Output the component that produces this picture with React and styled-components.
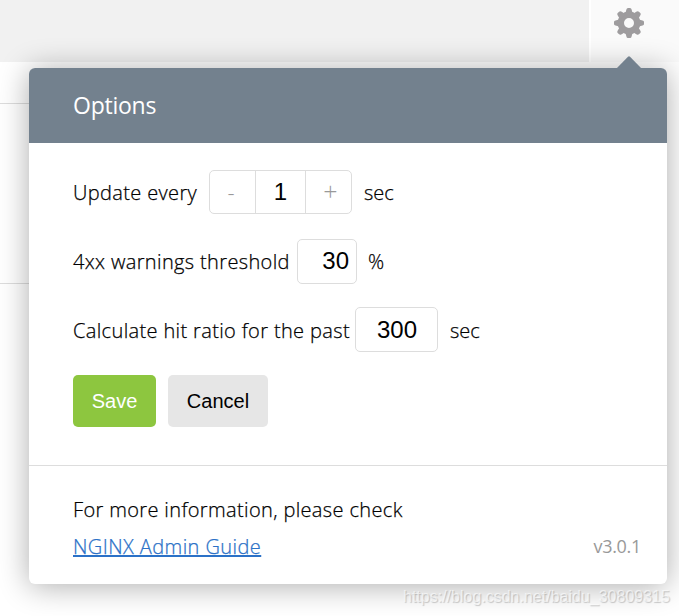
import React from "react";
import styled, { createGlobalStyle } from "styled-components";

const Global = createGlobalStyle`
  *, *::before, *::after { box-sizing: border-box; }
  body { margin: 0; background: #fff; overflow: hidden; }
`;

const Page = styled.div`
  position: relative;
  width: 679px;
  height: 616px;
  overflow: hidden;
  background: #fff;
  color: #000;
  font: 300 20px/30px "Open Sans", sans-serif;
`;

const TopBar = styled.header`
  display: flex;
  justify-content: space-between;
  height: 62px;
`;

const NavSpace = styled.div`
  width: 589px;
  background: #f1f1f1;
`;

const SettingsTab = styled.button`
  display: flex;
  justify-content: center;
  width: 88px;
  padding: 8px 12px 0 0;
  border: 0;
  background: #fafafa;
`;

const Backdrop = styled.div`
  width: 600px;
  height: ${(p) => p.$height}px;
  border-bottom: 1px solid #ddd;
`;

const Dialog = styled.section`
  position: absolute;
  left: 29px;
  top: 68px;
  width: 638px;
  height: 516px;
  display: flex;
  flex-direction: column;
  border-radius: 6px;
  background: #fff;
  box-shadow: 0 2px 31px rgba(0, 0, 0, 0.33);
`;

const Arrow = styled.svg`
  position: absolute;
  left: 587px;
  top: -12px;
`;

const Title = styled.h1`
  height: 75px;
  margin: 0;
  padding: 0 44px;
  border-radius: 6px 6px 0 0;
  background: #73818e;
  color: #fff;
  font-size: 23px;
  font-weight: 400;
  letter-spacing: -0.25px;
  line-height: 75px;
`;

const Form = styled.form`
  display: flex;
  flex-direction: column;
  height: 323px;
  padding: 27px 44px 0;
  border-bottom: 1px solid #ddd;
`;

const Row = styled.div`
  display: flex;
  align-items: center;
  height: 45px;
  margin-bottom: ${(p) => p.$gap}px;
  white-space: nowrap;
`;

const Label = styled.label`
  width: ${(p) => p.$width}px;
  padding-top: ${(p) => p.$drop || 0}px;
  letter-spacing: 0.36px;
  -webkit-text-stroke: 0.25px currentColor;
`;

const Unit = styled.span`
  margin-left: ${(p) => p.$gap || 12}px;
  padding-top: ${(p) => p.$drop || 0}px;
  -webkit-text-stroke: 0.25px currentColor;
`;

const Stepper = styled.div`
  display: flex;
  align-self: flex-start;
  width: 143px;
  height: 44px;
  border: 1px solid #ddd;
  border-radius: 5px;
`;

const StepButton = styled.button`
  width: 45px;
  padding: 0 3px 0 0;
  border: 0;
  background: none;
  color: #999;
  font: 300 22px/30px "Open Sans", sans-serif;

  &:last-child {
    padding: 0 0 3px 4px;
    font-size: 25px;
  }
`;

const StepValue = styled.output`
  flex: 1;
  border: solid #ddd;
  border-width: 0 1px;
  font: 400 24px/42px "Liberation Sans", Arial, sans-serif;
  text-align: center;
`;

const NumberInput = styled.input`
  width: ${(p) => p.$width}px;
  height: 45px;
  padding: 0 ${(p) => p.$right}px ${(p) => p.$lift || 0}px 0;
  border: 1px solid #ddd;
  border-radius: 5px;
  background: #fff;
  color: #000;
  font: 400 24px "Liberation Sans", Arial, sans-serif;
  text-align: right;
`;

const Actions = styled.div`
  display: flex;
  gap: 12px;
`;

const Action = styled.button`
  width: ${(p) => (p.$primary ? 83 : 100)}px;
  height: 52px;
  padding: 0;
  border: 0;
  border-radius: 5px;
  background: ${(p) => (p.$primary ? "#8dc63f" : "#e6e6e6")};
  color: ${(p) => (p.$primary ? "#fff" : "#000")};
  font: 400 20px "Liberation Sans", Arial, sans-serif;
`;

const Footer = styled.footer`
  display: flex;
  justify-content: space-between;
  align-items: flex-end;
  height: 118px;
  padding: 0 26px 19px 44px;
  line-height: 37px;
`;

const Help = styled.p`
  margin: 0;
  letter-spacing: 0.36px;
  -webkit-text-stroke: 0.25px currentColor;
`;

const GuideLink = styled.a`
  display: block;
  width: max-content;
  color: #2b71c7;
  letter-spacing: 0.42px;
  text-decoration: underline;
  text-decoration-thickness: 2px;
  text-underline-offset: 1px;
`;

const Version = styled.span`
  color: #999;
  font-size: 18px;
  font-weight: 400;
  letter-spacing: -0.3px;
  line-height: 37px;
`;

const Watermark = styled.span`
  position: absolute;
  left: 403px;
  top: 587px;
  color: rgba(255, 255, 255, 0.6);
  font: 400 16px/20px "Liberation Sans", Arial, sans-serif;
  text-shadow: 1px 1px 1px rgba(0, 0, 0, 0.2);
  white-space: nowrap;
`;

const TOOTH = "M-3.8 -9 L-2.6 -13.5 Q-2.3 -15 -1 -15 H1 Q2.3 -15 2.6 -13.5 L3.8 -9Z";

const Gear = () => (
  <svg width="30" height="30" viewBox="-15 -15 30 30" fill="#9e9c9e">
    <circle r="8.2" fill="none" stroke="#9e9c9e" strokeWidth="6.4" />
    {[0, 45, 90, 135, 180, 225, 270, 315].map((a) => (
      <path key={a} d={TOOTH} transform={`rotate(${a})`} />
    ))}
  </svg>
);

export default function App() {
  return (
    <Page>
      <Global />
      <TopBar>
        <NavSpace />
        <SettingsTab aria-label="Settings"><Gear /></SettingsTab>
      </TopBar>
      <Backdrop $height={42} />
      <Backdrop $height={180} />
      <Dialog>
        <Arrow width="26" height="13" viewBox="0 0 26 13">
          <path d="M0 13 L12 .8 Q13 -.2 14 .8 L26 13Z" fill="#73818e" />
        </Arrow>
        <Title>Options</Title>
        <Form>
          <Row $gap={24}>
            <Label $width={136}>Update every</Label>
            <Stepper>
              <StepButton type="button">-</StepButton>
              <StepValue>1</StepValue>
              <StepButton type="button">+</StepButton>
            </Stepper>
            <Unit>sec</Unit>
          </Row>
          <Row $gap={23}>
            <Label $width={224}>4xx warnings threshold</Label>
            <NumberInput $width={60} $right={7} $lift={2} defaultValue="30" />
            <Unit $gap={11}>%</Unit>
          </Row>
          <Row $gap={23}>
            <Label $width={282} $drop={2}>Calculate hit ratio for the past</Label>
            <NumberInput $width={83} $right={20} defaultValue="300" />
            <Unit $drop={2}>sec</Unit>
          </Row>
          <Actions>
            <Action type="button" $primary>Save</Action>
            <Action type="button">Cancel</Action>
          </Actions>
        </Form>
        <Footer>
          <Help>
            For more information, please check
            <GuideLink href="#">NGINX Admin Guide</GuideLink>
          </Help>
          <Version>v3.0.1</Version>
        </Footer>
      </Dialog>
      <Watermark>https://blog.csdn.net/baidu_30809315</Watermark>
    </Page>
  );
}
